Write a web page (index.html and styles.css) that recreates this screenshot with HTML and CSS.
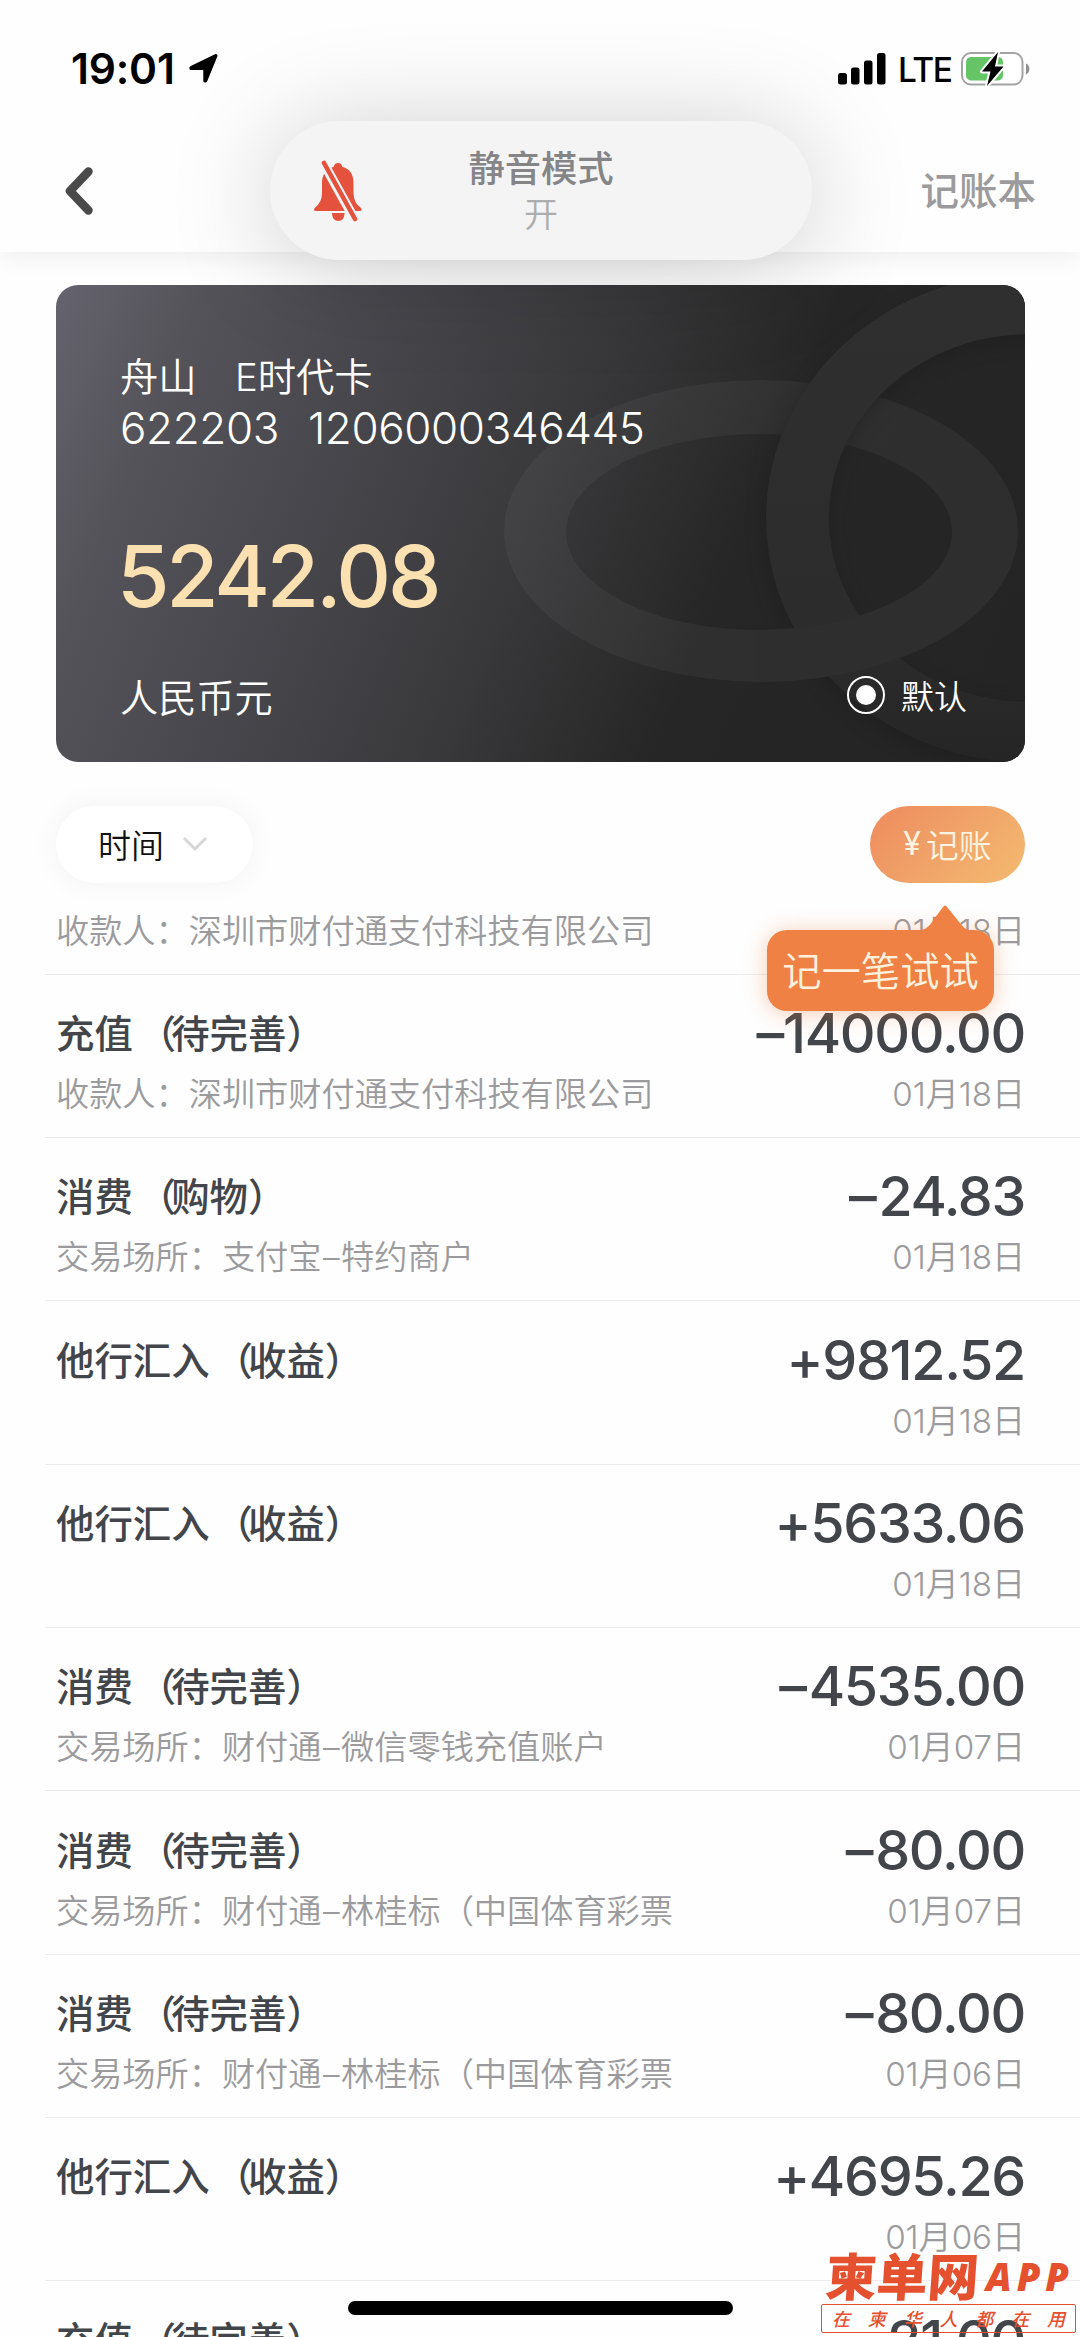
FILE: index.html
```html
<!DOCTYPE html>
<html lang="zh-CN">
<head>
<meta charset="utf-8">
<title>账户明细</title>
<link rel="stylesheet" href="styles.css">
</head>
<body>
<div class="screen">
  <header class="header">
    <div class="status">
      <span class="time">19:01</span>
      <svg class="nav-arrow" width="29" height="30" viewBox="0 0 29 30"><path d="M26 1.200 1.800 13C-.3 14.100 0 17 2.300 17H13.200c.8 0 1.100.3 1.100 1.100V27.500c0 2.400 2.900 2.800 3.900.8L28.300 3.600C29 1.900 27.600.4 26 1.200z"/></svg>
      <svg class="signal" width="48" height="32" viewBox="0 0 48 32"><rect x="0" y="20" width="9" height="11.500" rx="2.500"/><rect x="13" y="14.500" width="8.500" height="17" rx="2.500"/><rect x="26" y="7.500" width="8.500" height="24" rx="2.500"/><rect x="39" y="0" width="8.500" height="31.500" rx="2.500"/></svg>
      <span class="lte">LTE</span>
      <svg class="battery" width="70" height="38" viewBox="0 0 70 38"><rect x="1" y="3" width="60.500" height="31.500" rx="9" fill="#fff" stroke="#a3a3a5" stroke-width="2"/><rect x="5" y="7" width="37" height="23.500" rx="5" fill="#64c466"/><path d="M65 13.500c4.500 2 4.500 9 0 11z" fill="#8f8f91"/><path d="M37 2 21 21.500h8.500L26 36l16.500-19.500H34z" fill="#000" stroke="#fff" stroke-width="4" stroke-linejoin="round" paint-order="stroke"/></svg>
    </div>
    <nav class="nav">
      <svg class="back" width="28" height="48" viewBox="0 0 28 48"><path d="M23.500 4.500 5 24l18.500 19.500" fill="none" stroke="#4a4a4b" stroke-width="8.500" stroke-linecap="round" stroke-linejoin="round"/></svg>
      <span class="book">记账本</span>
    </nav>
  </header>

  <section class="card">
    <svg class="rings" viewBox="0 0 969 477" width="969" height="477">
      <defs>
        <clipPath id="low"><rect x="700" y="280" width="269" height="197"/></clipPath>
        <linearGradient id="hoop" gradientUnits="userSpaceOnUse" x1="0" y1="0" x2="0" y2="477"><stop offset="0" stop-color="#2f2f2f"/><stop offset=".75" stop-color="#2c2c2c"/><stop offset="1" stop-color="#252525"/></linearGradient>
        <filter id="soft" x="-20%" y="-20%" width="140%" height="140%" color-interpolation-filters="sRGB"><feDropShadow dx="-2" dy="6" stdDeviation="9" flood-color="#1a1a1a" flood-opacity=".4"/></filter>
      </defs>
      <path fill="#ffffff" fill-opacity=".045" fill-rule="evenodd" d="M448 246a257 151 0 1 0 514 0a257 151 0 1 0-514 0zM510 247a193 98 0 1 0 386 0a193 98 0 1 0-386 0z"/>
      <path filter="url(#soft)" fill="url(#hoop)" fill-rule="evenodd" d="M710 233a264 245 0 1 0 528 0a264 245 0 1 0-528 0zM773 233a201 184 0 1 0 402 0a201 184 0 1 0-402 0z"/>
      <path clip-path="url(#low)" fill="#2e2e2e" fill-rule="evenodd" d="M448 246a257 151 0 1 0 514 0a257 151 0 1 0-514 0zM510 247a193 98 0 1 0 386 0a193 98 0 1 0-386 0z"/>
    </svg>
    <div class="card-body">
      <div class="card-name">舟山　E时代卡</div>
      <div class="card-no"><span>622203</span><span>1206000346445</span></div>
      <div class="balance">5242.08</div>
      <div class="card-foot">
        <span>人民币元</span>
        <span class="default"><i class="radio"></i>默认</span>
      </div>
    </div>
  </section>

  <div class="tools">
    <button class="filter">时间<svg width="26" height="16" viewBox="0 0 26 16"><path d="M2 2l11 11L24 2" fill="none" stroke="#d6d6d8" stroke-width="3"/></svg></button>
    <button class="record"><span class="yen">¥</span>记账</button>
    <div class="tip">
      <svg class="tip-arrow" width="56" height="27" viewBox="0 0 56 27"><path d="M0 27C10 26 13 21 16 16.500L26 3q2-3 4 0l11 13.500C45 22 48 26 56 27z" fill="#ee8143"/></svg>
      记一笔试试
    </div>
  </div>

  <main class="list">
    <article class="row partial"><div class="sub"><span>收款人：深圳市财付通支付科技有限公司</span><time>01月18日</time></div></article>
    <article class="row"><div class="top"><h2>充值<i class="paren">（</i>待完善）</h2><b>–14000.00</b></div><div class="sub"><span>收款人：深圳市财付通支付科技有限公司</span><time>01月18日</time></div></article>
    <article class="row"><div class="top"><h2>消费<i class="paren">（</i>购物）</h2><b><i class="minus">–</i>24.83</b></div><div class="sub"><span>交易场所：支付宝<i class="dash">–</i>特约商户</span><time>01月18日</time></div></article>
    <article class="row"><div class="top"><h2>他行汇入<i class="paren">（</i>收益）</h2><b>+9812.52</b></div><div class="sub"><span></span><time>01月18日</time></div></article>
    <article class="row"><div class="top"><h2>他行汇入<i class="paren">（</i>收益）</h2><b>+5633.06</b></div><div class="sub"><span></span><time>01月18日</time></div></article>
    <article class="row"><div class="top"><h2>消费<i class="paren">（</i>待完善）</h2><b><i class="minus">–</i>4535.00</b></div><div class="sub"><span>交易场所：财付通<i class="dash">–</i>微信零钱充值账户</span><time>01月07日</time></div></article>
    <article class="row"><div class="top"><h2>消费<i class="paren">（</i>待完善）</h2><b><i class="minus">–</i>80.00</b></div><div class="sub"><span>交易场所：财付通<i class="dash">–</i>林桂标（中国体育彩票</span><time>01月07日</time></div></article>
    <article class="row"><div class="top"><h2>消费<i class="paren">（</i>待完善）</h2><b><i class="minus">–</i>80.00</b></div><div class="sub"><span>交易场所：财付通<i class="dash">–</i>林桂标（中国体育彩票</span><time>01月06日</time></div></article>
    <article class="row"><div class="top"><h2>他行汇入<i class="paren">（</i>收益）</h2><b>+4695.26</b></div><div class="sub"><span></span><time>01月06日</time></div></article>
    <article class="row"><div class="top"><h2>充值<i class="paren">（</i>待完善）</h2><b><i class="minus">–</i>21.00</b></div></article>
  </main>

  <div class="toast">
    <svg class="bell" width="50" height="62" viewBox="0 0 50 62"><g fill="#e4513c"><path d="M25 3c2.300 0 4 1.500 4.200 3.800C37 9 40.500 14.500 40.500 23v9c0 8 3 12.500 7 15.500 1.500 1.300 1.300 3.500-.5 3.500H2.500C1 51 .5 49.200 2 47.800 6.500 43.500 9 40 9 32v-9c0-8.500 4-14 11.800-16.200C21 4.500 22.700 3 25 3z"/><path d="M19 53h12.500c0 5-2.500 8-6.200 8S19 58 19 53z"/></g><path d="M10.500 3 41.500 59" stroke="#f4f4f5" stroke-width="9.500"/><path d="M11 3 42 59" stroke="#e4513c" stroke-width="4.600" stroke-linecap="round"/></svg>
    <strong>静音模式</strong>
    <span>开</span>
  </div>

  <div class="home-bar"></div>

  <div class="watermark">
    <div class="brand"><span class="brand-cn">柬单网</span><span class="brand-app">APP</span></div>
    <div class="slogan"><span>在</span><span>柬</span><span>华</span><span>人</span><span>都</span><span>在</span><span>用</span></div>
  </div>
</div>
</body>
</html>
```
FILE: styles.css
```css
* { box-sizing: border-box; }
body {
  margin: 0;
  background: #fefefe;
  font-family: Inter, "Noto Sans CJK SC", sans-serif;
  font-weight: 350;
}
svg { display: block; flex: none; }
.screen {
  position: relative;
  width: 1080px;
  height: 2337px;
  overflow: hidden;
  white-space: nowrap;
}

/* header */
.header {
  height: 252px;
  background: #fefefe;
  box-shadow: 0 4px 24px rgba(0, 0, 0, .07);
}
.status {
  display: flex;
  height: 137px;
  padding: 0 49px 0 71px;
  align-items: center;
}
.time { width: 118px; font-size: 42.500px; font-weight: 600; letter-spacing: -.2px; }
.nav-arrow { margin-top: -2px; }
.signal { margin-left: auto; }
.lte { width: 62px; padding-left: 12px; font-size: 33.500px; font-weight: 500; letter-spacing: -1.5px; margin-top: 3px; }
.battery { margin-left: 13px; }
.nav {
  display: flex;
  height: 108px;
  padding: 0 44px 0 65px;
  align-items: center;
  justify-content: space-between;
}
.book { font-size: 38.500px; line-height: 50px; font-weight: 500; color: #9b9b9d; }

/* card */
.card {
  position: relative;
  width: 969px;
  height: 477px;
  margin: 33px 0 0 56px;
  border-radius: 22px;
  overflow: hidden;
  color: #fff;
  background: linear-gradient(112deg, #65636e 0%, #545359 13%, #434247 36%, #38383a 50%, #262626 68%, #242424 100%);
}
.rings { position: absolute; left: 0; top: 0; }
.card-body { position: relative; padding: 66px 58px 0 64px; }
.card-name { font-size: 38.300px; line-height: 52px; }
.card-no {
  display: flex;
  gap: 29px;
  font-size: 44px;
  line-height: 50px;
  letter-spacing: -.4px;
}
.balance {
  margin: 74px 0 0 -3px;
  font-size: 85px;
  line-height: 100px;
  font-weight: 500;
  letter-spacing: -3.200px;
  color: #fbe0b1;
}
.card-foot {
  display: flex;
  margin-top: 42px;
  height: 52px;
  align-items: center;
  justify-content: space-between;
  font-size: 38.200px;
}
.default { display: flex; align-items: center; gap: 16px; font-size: 33px; }
.radio {
  display: grid;
  place-items: center;
  width: 38px;
  height: 38px;
  border: 2px solid #fff;
  border-radius: 50%;
}
.radio::after { content: ""; width: 20px; height: 20px; border-radius: 50%; background: #fff; }

/* filter and record buttons */
.tools {
  position: relative;
  z-index: 1;
  display: flex;
  justify-content: space-between;
  margin: 44px 55px 0 56px;
}
button {
  display: flex;
  height: 77px;
  padding: 0 0 2px;
  border: 0;
  border-radius: 39px;
  align-items: center;
  justify-content: center;
  font: 350 33px Inter, "Noto Sans CJK SC", sans-serif;
}
.filter { width: 197px; padding-right: 3px; gap: 18px; background: #fff; color: #111; box-shadow: 0 0 30px rgba(0, 0, 0, .05); }
.record { width: 155px; gap: 5px; color: #fff4e0; background: linear-gradient(135deg, #ef9060 10%, #f0a168 45%, #f4bb70 100%); }
.yen { font-size: 32px; font-weight: 400; }
.tip {
  position: absolute;
  right: 31px;
  top: 124px;
  width: 227px;
  height: 81px;
  border-radius: 20px;
  background: #ee8143;
  box-shadow: 0 2px 22px rgba(238, 129, 67, .4);
  color: #fff1de;
  font-size: 39.300px;
  line-height: 83px;
  text-align: center;
}
.tip-arrow { position: absolute; left: 150px; top: -26px; }

/* transactions */
.row {
  height: 163.350px;
  margin-left: 45px;
  padding: 32px 55px 0 11px;
  border-bottom: 1.5px solid #ececee;
}
.row.partial { height: 91.500px; padding-top: 19px; }
.top, .sub { display: flex; justify-content: space-between; align-items: center; }
.top { height: 52px; color: #42454a; }
.sub { height: 52px; margin-top: 7px; color: #9b9b9d; font-size: 33.200px; }
.partial .sub { margin: 0; }
h2 { margin: 0; padding-bottom: 3px; font-size: 38.400px; font-weight: 500; }
b { font-size: 55.500px; font-weight: 550; letter-spacing: -1.300px; }
time { letter-spacing: -.1px; }
.paren, .dash, .minus { font-style: normal; }
.paren { margin: 0 -5px 0 5px; }
.dash { margin: 0 1.500px; }
.minus { margin-right: 3px; }

/* silent mode banner */
.toast {
  position: absolute;
  left: 270px;
  top: 121px;
  z-index: 2;
  display: flex;
  flex-direction: column;
  align-items: center;
  width: 542px;
  height: 139px;
  padding-top: 24px;
  border-radius: 70px;
  background: #f4f4f5;
  box-shadow: 0 8px 110px rgba(0, 0, 0, .2);
}
.bell { position: absolute; left: 43px; top: 39px; }
.toast strong { height: 47px; font-size: 36.300px; line-height: 48px; font-weight: 500; color: #858587; }
.toast span { font-size: 34px; line-height: 46px; color: #adadaf; }

.home-bar {
  position: absolute;
  left: 348px;
  top: 2301px;
  width: 385px;
  height: 14px;
  border-radius: 7px;
  background: #000;
}

/* watermark */
.watermark {
  position: absolute;
  left: 821px;
  top: 2248px;
  width: 255px;
  color: #e5502f;
}
.brand { display: flex; height: 56px; align-items: center; }
.brand-cn {
  width: 165px;
  padding-left: 5px;
  font: 900 51px/56px "Noto Sans CJK SC", sans-serif;
  transform: translateY(-2px) skewX(-4deg);
}
.brand-app { font: italic 800 38px/56px "Open Sans", sans-serif; letter-spacing: 5px; }
.slogan {
  display: flex;
  height: 29px;
  padding: 0 10px;
  border: 1px solid #e5502f;
  border-radius: 2px;
  align-items: center;
  justify-content: space-between;
  font: italic 500 18px/27px "Noto Sans CJK SC", sans-serif;
}
```
